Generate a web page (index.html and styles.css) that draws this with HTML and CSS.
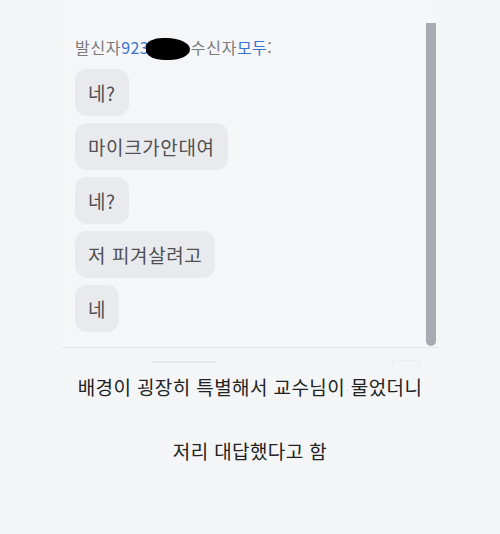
FILE: index.html
```html
<!DOCTYPE html>
<html lang="ko">
<head>
  <meta charset="UTF-8">
  <meta name="viewport" content="width=device-width, initial-scale=1.0">
  <title>채팅</title>
  <link rel="stylesheet" href="styles.css">
</head>
<body>
  <div class="chat">
    <div class="messages">
      <div class="sender">
        발신자<span class="name">923</span><span class="blot"></span>수신자<span class="name">모두</span>:
      </div>
      <div class="bubble">네?</div>
      <div class="bubble">마이크가안대여</div>
      <div class="bubble">네?</div>
      <div class="bubble">저 피겨살려고</div>
      <div class="bubble">네</div>
    </div>
    <div class="scrollbar"></div>
  </div>
  <div class="toolbar">
    <span class="ghost-line"></span>
    <span class="ghost-box"></span>
  </div>

  <div class="caption">
    <p>배경이 굉장히 특별해서 교수님이 물었더니</p>
    <p>저리 대답했다고 함</p>
  </div>
</body>
</html>
```

FILE: styles.css
```css
body {
  margin: 0;
  background-color: #f4f5f7;
  font-family: "Noto Sans CJK KR", "Noto Sans", sans-serif;
  color: #222;
}
.chat {
  display: flex;
  width: 376px;
  height: 348px;
  margin-left: 62px;
  background-color: #f5f6f8;
  border-bottom: 1px solid #e4e5e9;
  box-sizing: border-box;
}
.messages {
  flex: 1;
  display: flex;
  flex-direction: column;
  align-items: flex-start;
  gap: 7px;
  padding: 37px 0 0 13px;
}
.sender {
  height: 20px;
  font-size: 16px;
  line-height: 20px;
  letter-spacing: 0.7px;
  color: #7a7a7a;
  margin-bottom: 5px;
  display: flex;
  align-items: center;
}
.name {
  color: #3a74c9;
  letter-spacing: 0.3px;
}
.blot {
  display: inline-block;
  width: 44px;
  height: 22px;
  margin: 0 1px 0 -3px;
  background-color: #000;
  border-radius: 40% 55% 50% 45%;
  transform: translateY(2px);
}
.bubble {
  background-color: #e9eaee;
  border-radius: 12px;
  padding: 12px 13px;
  font-size: 19px;
  line-height: 23px;
  letter-spacing: 0.6px;
  color: #505050;
}
.scrollbar {
  width: 10px;
  height: 323px;
  margin: 23px 2px 0 0;
  background-color: #a9a9b1;
  border-radius: 0 0 5px 5px;
}
.toolbar {
  position: relative;
  height: 23px;
  width: 376px;
  margin-left: 62px;
}
.ghost-line {
  position: absolute;
  left: 90px;
  top: 13px;
  width: 64px;
  height: 2px;
  background-color: #e7e8eb;
}
.ghost-box {
  position: absolute;
  left: 330px;
  top: 12px;
  width: 26px;
  height: 10px;
  border: 1px solid #eceef0;
  border-bottom: none;
  border-radius: 3px 3px 0 0;
}
.caption {
  text-align: center;
  font-size: 19px;
  line-height: 32px;
  letter-spacing: 0.4px;
  color: #222;
}
.caption p {
  margin: 0 0 32px;
}
```
